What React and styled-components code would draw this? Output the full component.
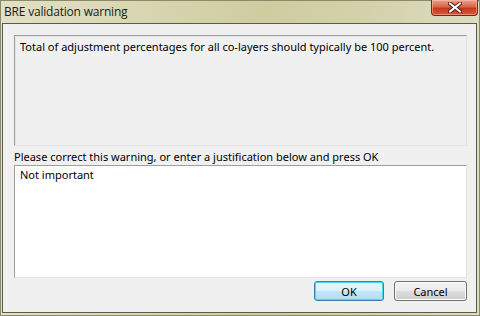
import React from "react";
import styled, { createGlobalStyle } from "styled-components";

const Global = createGlobalStyle`
    html, body { margin: 0; padding: 0; background: #d9d7b4; }
    * { box-sizing: border-box; }
`;

const Window = styled.div`
    width: 480px;
    height: 316px;
    display: flex;
    flex-direction: column;
    background: linear-gradient(90deg, #e2e0c6 0%, #d8d6b0 30%, #cfcca0 55%, #d3d1a8 75%, #dcdcc0 100%);
    border: 1px solid #8c8a6c;
    font-family: "Noto Sans", "Liberation Sans", sans-serif;
`;

const TitleBar = styled.div`
    height: 22px;
    display: flex;
    align-items: flex-start;
    justify-content: space-between;
    padding-left: 3px;
`;

const Title = styled.span`
    font-family: "Open Sans", "Liberation Sans", sans-serif;
    font-size: 12px;
    color: #1b1b1b;
    line-height: 22px;
    letter-spacing: -0.2px;
`;

const CloseButton = styled.div`
    width: 47px;
    height: 16px;
    margin-right: 1px;
    margin-top: -1px;
    border: 1px solid #6b2a1c;
    border-top: none;
    border-radius: 0 0 4px 4px;
    background: linear-gradient(180deg, #eba28c 0%, #d9654a 45%, #c7381b 55%, #d5583a 100%);
    box-shadow: inset 0 0 0 1px rgba(255, 200, 180, 0.5);
    display: flex;
    align-items: center;
    justify-content: center;
`;

const Body = styled.div`
    flex: 1;
    display: flex;
    padding: 0 2px 2px 1px;
`;

const Client = styled.div`
    flex: 1;
    display: flex;
    flex-direction: column;
    background: #f0f0f0;
    border: 1px solid #5c5a48;
    padding: 11px 9px 0 11px;
    font-size: 11px;
    color: #000;
`;

const MessageBox = styled.div`
    height: 111px;
    background: #f0f0f0;
    border: 1px solid #e3e3e3;
    border-top-color: #a0a0a0;
    border-left-color: #a0a0a0;
    box-shadow: inset 1px 1px 0 #e3e3e3;
    padding: 3px 5px;
    line-height: 15px;
`;

const Label = styled.div`
    height: 17px;
    line-height: 17px;
    margin-top: 2px;
`;

const TextArea = styled.div`
    height: 113px;
    background: #fff;
    border: 1px solid #e3e3e3;
    border-top-color: #a0a0a0;
    border-left-color: #a0a0a0;
    padding: 1px 5px;
    line-height: 15px;
`;

const ButtonRow = styled.div`
    display: flex;
    justify-content: flex-end;
    gap: 10px;
    margin-top: 3px;
`;

const Button = styled.div`
    width: ${p => p.w}px;
    height: 20px;
    border-radius: 3px;
    border: 1px solid ${p => p.primary ? "#3c7fb1" : "#707070"};
    background: ${p => p.primary
        ? "linear-gradient(180deg, #ecf7fd 0%, #dcf0fb 50%, #c4e5f7 51%, #b4ddf3 100%)"
        : "linear-gradient(180deg, #f2f2f2 0%, #ebebeb 50%, #dddddd 51%, #cfcfcf 100%)"};
    box-shadow: inset 0 0 0 1px ${p => p.primary ? "#48d7fb" : "#fcfcfc"};
    display: flex;
    align-items: center;
    justify-content: center;
    font-size: 11px;
`;

export default function App() {
    return (
        <>
            <Global />
            <Window>
                <TitleBar>
                    <Title>BRE validation warning</Title>
                    <CloseButton>
                        <svg width="14" height="11" viewBox="0 0 14 11">
                            <path d="M2 1.5 L12 9.5 M12 1.5 L2 9.5" stroke="#4a1a10" strokeWidth="4" strokeLinecap="square" />
                            <path d="M2 1.5 L12 9.5 M12 1.5 L2 9.5" stroke="#ffffff" strokeWidth="2" strokeLinecap="square" />
                        </svg>
                    </CloseButton>
                </TitleBar>
                <Body>
                    <Client>
                        <MessageBox>Total of adjustment percentages for all co-layers should typically be 100 percent.</MessageBox>
                        <Label>Please correct this warning, or enter a justification below and press OK</Label>
                        <TextArea>Not important</TextArea>
                        <ButtonRow>
                            <Button primary w={70}>OK</Button>
                            <Button w={73}>Cancel</Button>
                        </ButtonRow>
                    </Client>
                </Body>
            </Window>
        </>
    );
}
